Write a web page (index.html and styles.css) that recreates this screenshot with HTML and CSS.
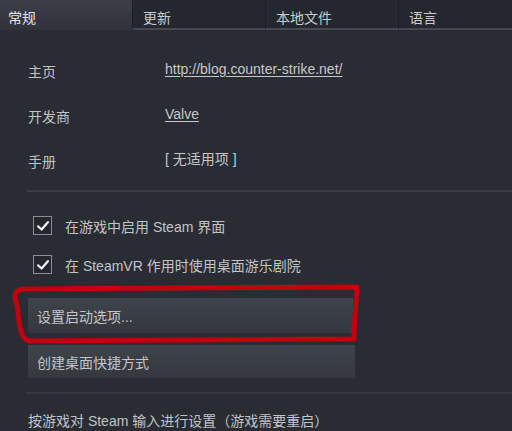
FILE: index.html
```html
<!DOCTYPE html>
<html lang="zh-CN">
<head>
    <meta charset="UTF-8">
    <meta name="viewport" content="width=device-width, initial-scale=1.0">
    <title>属性</title>
    <link rel="stylesheet" href="styles.css">
</head>
<body>
    <div class="tabs">
        <div class="tab active">常规</div>
        <div class="tab">更新</div>
        <div class="tab">本地文件</div>
        <div class="tab">语言</div>
    </div>

    <div class="panel">
        <div class="info">
            <div class="info-row">
                <span class="label">主页</span>
                <a class="value link" href="#">http://blog.counter-strike.net/</a>
            </div>
            <div class="info-row">
                <span class="label">开发商</span>
                <a class="value link" href="#">Valve</a>
            </div>
            <div class="info-row">
                <span class="label">手册</span>
                <span class="value">[ 无适用项 ]</span>
            </div>
        </div>

        <div class="sep"></div>

        <div class="checks">
            <label class="check-row">
                <span class="box">
                    <svg viewBox="0 0 20 20" width="14" height="14"><path d="M3 10.5 L8 15 L17 4.5" fill="none" stroke="#f2f2f2" stroke-width="3.2" stroke-linecap="round" stroke-linejoin="round"/></svg>
                </span>
                在游戏中启用 Steam 界面
            </label>
            <label class="check-row">
                <span class="box">
                    <svg viewBox="0 0 20 20" width="14" height="14"><path d="M3 10.5 L8 15 L17 4.5" fill="none" stroke="#f2f2f2" stroke-width="3.2" stroke-linecap="round" stroke-linejoin="round"/></svg>
                </span>
                在 SteamVR 作用时使用桌面游乐剧院
            </label>
        </div>

        <div class="buttons">
            <button class="btn">设置启动选项...</button>
            <button class="btn btn-wide">创建桌面快捷方式</button>
        </div>

        <div class="sep sep-low"></div>

        <p class="note">按游戏对 Steam 输入进行设置（游戏需要重启）</p>

        <!-- 红色标注框 -->
        <svg class="mark" width="512" height="431" viewBox="0 0 512 431">
            <path d="M17 304 C13 297 14 291 22 289 L357 287 C356 305 354 322 354 339 L30 341 C23 340 21 334 19 322 Z"
                  fill="none" stroke="#c3000e" stroke-width="5" stroke-linejoin="round"/>
        </svg>
    </div>
</body>
</html>
```

FILE: styles.css
```css
body {
    margin: 0;
    padding: 0;
    width: 512px;
    height: 431px;
    overflow: hidden;
    background-color: #292c33;
    font-family: "Liberation Sans", "Noto Sans CJK SC", sans-serif;
    font-size: 14px;
    color: #c4c6ca;
    position: relative;
}

.tabs {
    display: flex;
    height: 30px;
}

.tab {
    width: 133px;
    box-sizing: border-box;
    padding: 7px 10px 0;
    background-color: #24272d;
    border-left: 1px solid #1c1e23;
    border-bottom: 2px solid #464950;
    color: #c9cbce;
}

.tab:last-child {
    flex: 1;
}

.tab.active {
    width: 132px;
    padding-left: 8px;
    border-left: none;
    border-bottom: none;
    background: linear-gradient(#3c3f46, #2f3239);
    color: #e4e5e7;
}

.panel {
    padding-top: 20px;
}

.info-row {
    display: flex;
    height: 45px;
    line-height: 20px;
}

.label {
    width: 137px;
    padding-left: 28px;
    padding-top: 12px;
    color: #c0c2c6;
}

.value {
    padding-top: 9px;
    color: #c6c8cb;
}

.link {
    text-decoration: underline;
    text-underline-offset: 2px;
}

.sep {
    height: 2px;
    margin: 5px 0 0 27px;
    background-color: #3b3e45;
}

.checks {
    margin-top: 14px;
}

.check-row {
    display: flex;
    align-items: center;
    height: 39px;
    padding-left: 33px;
    color: #c2c4c8;
}

.box {
    width: 19px;
    height: 19px;
    box-sizing: border-box;
    border: 1px solid #8b8e94;
    background-color: #24272d;
    display: flex;
    align-items: center;
    justify-content: center;
    margin-right: 13px;
}

.buttons {
    display: flex;
    flex-direction: column;
    gap: 12px;
    margin-top: 14px;
    padding-left: 28px;
}

.btn {
    width: 325px;
    height: 35px;
    text-align: left;
    padding: 0 9px;
    border: none;
    background: linear-gradient(#3f434a, #34373e);
    color: #c4c6c9;
    font-family: inherit;
    font-size: 14px;
}

.btn-wide {
    width: 327px;
    height: 33px;
}

.sep-low {
    margin-top: 14px;
    background-color: #363940;
}

.note {
    margin: 17px 0 0 28px;
    line-height: 20px;
    color: #c2c4c8;
}

.mark {
    position: absolute;
    left: 0;
    top: 0;
    pointer-events: none;
}
```
